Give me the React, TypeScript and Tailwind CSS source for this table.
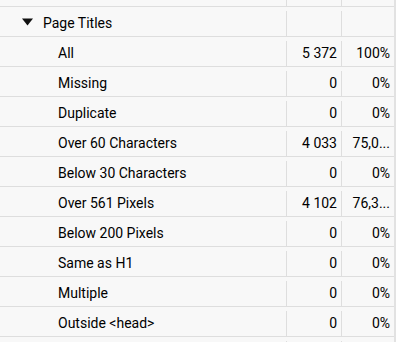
const rows = [
  { label: 'All', count: '5 372', pct: '100%' },
  { label: 'Missing', count: '0', pct: '0%' },
  { label: 'Duplicate', count: '0', pct: '0%' },
  { label: 'Over 60 Characters', count: '4 033', pct: '75,0...' },
  { label: 'Below 30 Characters', count: '0', pct: '0%' },
  { label: 'Over 561 Pixels', count: '4 102', pct: '76,3...' },
  { label: 'Below 200 Pixels', count: '0', pct: '0%' },
  { label: 'Same as H1', count: '0', pct: '0%' },
  { label: 'Multiple', count: '0', pct: '0%' },
  { label: 'Outside <head>', count: '0', pct: '0%' },
];

function Row({
  label,
  count,
  pct,
  header,
  h = 'h-[30px] pt-[4px]',
}: {
  label?: string;
  count?: string;
  pct?: string;
  header?: boolean;
  h?: string;
}) {
  return (
    <div className={`flex ${h} border-b border-[#dedede] text-[14px] text-black`}>
      <div className="flex w-[287px] items-center border-r border-[#dedede]">
        {header ? (
          <>
            <svg width="11" height="8" viewBox="0 0 11 8" className="ml-[22px] mr-[10px] mt-[-3px]">
              <path d="M0 0.5h11L5.5 7.5z" fill="#111" />
            </svg>
            <span>{label}</span>
          </>
        ) : (
          <span className="ml-[58px]">{label}</span>
        )}
      </div>
      <div className="flex w-[55px] items-center justify-end border-r border-[#dedede] pr-[4px]">
        {count}
      </div>
      <div className="flex flex-1 items-center justify-end pr-[4px]">{pct}</div>
    </div>
  );
}

export default function App() {
  return (
    <div
      className="h-[342px] w-[396px] overflow-hidden bg-[#f8f8f8]"
      style={{ fontFamily: 'Roboto, "Liberation Sans", sans-serif' }}
    >
      <div className="w-[396px] border-r-2 border-[#e2e2e2]">
        <Row h="h-[7px]" />
        <Row header label="Page Titles" />
        {rows.map((r) => (
          <Row key={r.label} {...r} />
        ))}
        <Row />
      </div>
    </div>
  );
}
